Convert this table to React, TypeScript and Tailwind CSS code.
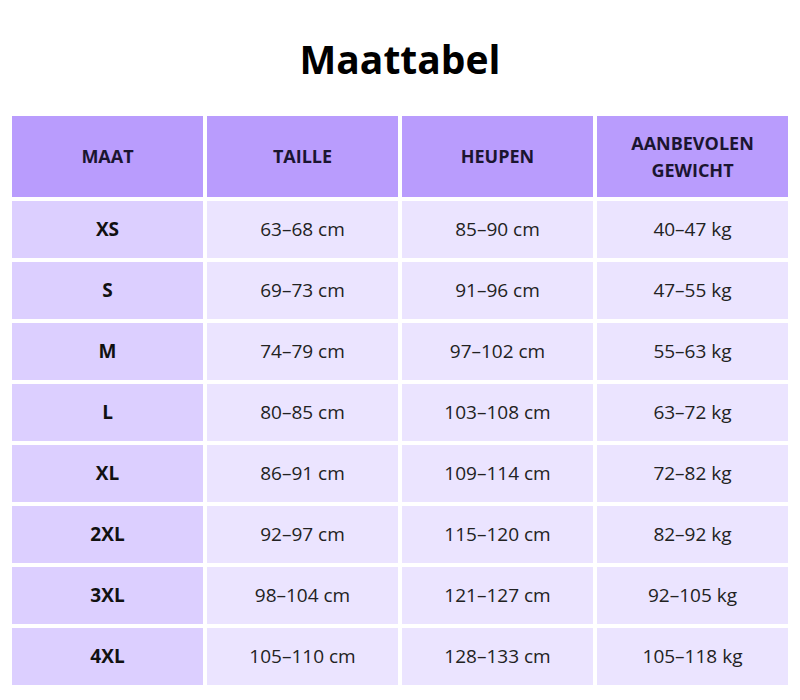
import React from 'react';

const rows: [string, string, string, string][] = [
  ['XS', '63–68 cm', '85–90 cm', '40–47 kg'],
  ['S', '69–73 cm', '91–96 cm', '47–55 kg'],
  ['M', '74–79 cm', '97–102 cm', '55–63 kg'],
  ['L', '80–85 cm', '103–108 cm', '63–72 kg'],
  ['XL', '86–91 cm', '109–114 cm', '72–82 kg'],
  ['2XL', '92–97 cm', '115–120 cm', '82–92 kg'],
  ['3XL', '98–104 cm', '121–127 cm', '92–105 kg'],
  ['4XL', '105–110 cm', '128–133 cm', '105–118 kg'],
];

export default function App() {
  return (
    <div className="bg-white min-h-[700px] px-2 pt-[35px] font-['Open_Sans',sans-serif]">
      <h1 className="text-center text-[39px] leading-[47px] font-bold text-black">Maattabel</h1>
      <table className="mt-[30px] w-full border-separate border-spacing-[4px] table-fixed">
        <thead>
          <tr>
            {['MAAT', 'TAILLE', 'HEUPEN', 'AANBEVOLEN GEWICHT'].map((h) => (
              <th
                key={h}
                className="h-[81px] bg-[#b99cfd] px-6 text-center text-[18px] leading-[27px] font-bold text-[#1b1530]"
              >
                {h}
              </th>
            ))}
          </tr>
        </thead>
        <tbody>
          {rows.map((r) => (
            <tr key={r[0]}>
              <td className="h-[57px] bg-[#dccfff] text-center text-[19px] font-bold text-[#111]">{r[0]}</td>
              <td className="h-[57px] bg-[#ebe4ff] text-center text-[19px] text-[#222]">{r[1]}</td>
              <td className="h-[57px] bg-[#ebe4ff] text-center text-[19px] text-[#222]">{r[2]}</td>
              <td className="h-[57px] bg-[#ebe4ff] text-center text-[19px] text-[#222]">{r[3]}</td>
            </tr>
          ))}
        </tbody>
      </table>
    </div>
  );
}
